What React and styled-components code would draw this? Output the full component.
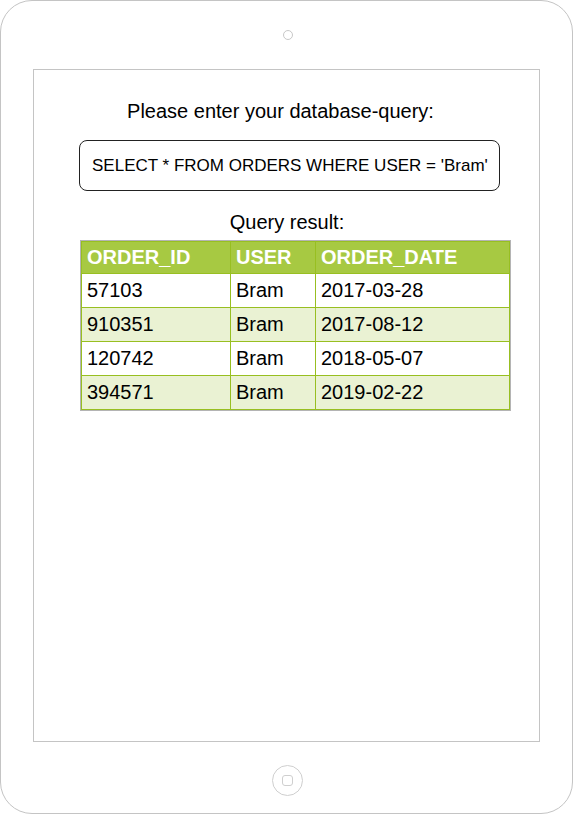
import styled, { createGlobalStyle } from "styled-components";

const GlobalStyle = createGlobalStyle`
  html, body {
    margin: 0;
    padding: 0;
    background: #ffffff;
  }
  body {
    font-family: "Liberation Sans", Arial, Helvetica, sans-serif;
    color: #000;
  }
`;

const Device = styled.div`
  box-sizing: border-box;
  width: 573px;
  height: 814px;
  border: 1px solid #c4c4c4;
  border-radius: 32px;
  display: flex;
  flex-direction: column;
  background: #fff;
`;

const TopBezel = styled.div`
  height: 68px;
  display: flex;
  align-items: center;
  justify-content: center;
  padding-left: 2px;
  box-sizing: border-box;
`;

const Camera = styled.div`
  width: 8px;
  height: 8px;
  border: 1px solid #c8c8c8;
  border-radius: 50%;
`;

const Screen = styled.div`
  box-sizing: border-box;
  width: 507px;
  height: 673px;
  margin-left: 32px;
  border: 1px solid #c4c4c4;
  display: flex;
  flex-direction: column;
  align-items: flex-start;
  padding-top: 30px;
`;

const Heading = styled.div`
  align-self: stretch;
  text-align: center;
  font-size: 20px;
  line-height: 23px;
  padding-right: ${(p) => p.$shift || 0}px;
  padding-left: ${(p) => p.$push || 0}px;
  margin-top: ${(p) => p.$top || 0}px;
`;

const QueryBox = styled.div`
  box-sizing: border-box;
  margin-top: 17px;
  margin-left: 45px;
  width: 421px;
  height: 51px;
  border: 1px solid #222;
  border-radius: 8px;
  display: flex;
  align-items: center;
  padding-left: 12px;
  font-size: 17px;
  white-space: nowrap;
`;

const TableFrame = styled.div`
  margin-top: 6px;
  margin-left: 46px;
  border: 1px solid #b4b4b4;
`;

const Table = styled.table`
  border-collapse: collapse;
  table-layout: fixed;
  width: 428px;
  font-size: 20px;
  line-height: 23px;
`;

const Th = styled.th`
  box-sizing: border-box;
  background: #a7c942;
  color: #fff;
  font-weight: bold;
  text-align: left;
  border: 1px solid #98bf21;
  padding: 4px 5px 4px;
  width: ${(p) => p.$w}px;
`;

const Td = styled.td`
  background: ${(p) => (p.$alt ? "#eaf2d3" : "#fff")};
  border: 1px solid #98bf21;
  padding: 5px 5px 5px;
`;

const BottomBezel = styled.div`
  flex: 1;
  display: flex;
  align-items: center;
  justify-content: center;
  padding-top: 6px;
  padding-left: 2px;
`;

const HomeButton = styled.div`
  width: 29px;
  height: 29px;
  border: 1px solid #cfcfcf;
  border-radius: 50%;
  display: flex;
  align-items: center;
  justify-content: center;
`;

const HomeSquare = styled.div`
  width: 9px;
  height: 9px;
  border: 1px solid #cfcfcf;
  border-radius: 3px;
`;

const rows = [
  ["57103", "Bram", "2017-03-28"],
  ["910351", "Bram", "2017-08-12"],
  ["120742", "Bram", "2018-05-07"],
  ["394571", "Bram", "2019-02-22"],
];

export default function App() {
  return (
    <>
      <GlobalStyle />
      <Device>
        <TopBezel>
          <Camera />
        </TopBezel>
        <Screen>
          <Heading $shift={12}>Please enter your database-query:</Heading>
          <QueryBox>SELECT * FROM ORDERS WHERE USER = 'Bram'</QueryBox>
          <Heading $top={20} $push={1}>Query result:</Heading>
          <TableFrame>
            <Table>
              <thead>
                <tr>
                  <Th $w={149}>ORDER_ID</Th>
                  <Th $w={85}>USER</Th>
                  <Th $w={194}>ORDER_DATE</Th>
                </tr>
              </thead>
              <tbody>
                {rows.map((r, i) => (
                  <tr key={r[0]}>
                    {r.map((c, j) => (
                      <Td key={j} $alt={i % 2 === 1}>
                        {c}
                      </Td>
                    ))}
                  </tr>
                ))}
              </tbody>
            </Table>
          </TableFrame>
        </Screen>
        <BottomBezel>
          <HomeButton>
            <HomeSquare />
          </HomeButton>
        </BottomBezel>
      </Device>
    </>
  );
}
